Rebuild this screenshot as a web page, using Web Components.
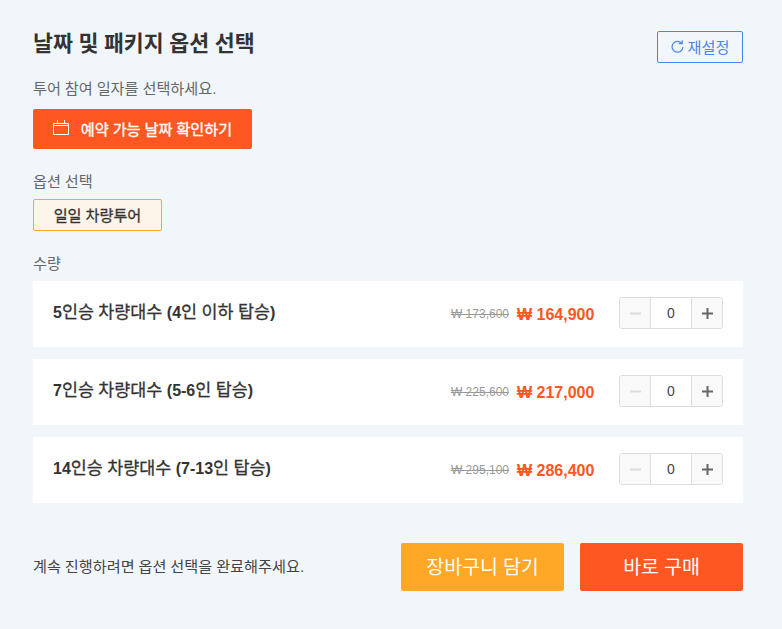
<!DOCTYPE html>
<html lang="ko">
<head>
<meta charset="utf-8">
<title>옵션 선택</title>
<style>
  html, body { margin: 0; background: #f1f6fb; }
  body { font-family: "Liberation Sans", "Noto Sans CJK KR", sans-serif; color: #222; }
</style>
</head>
<body>
<option-panel>
  <span slot="title">날짜 및 패키지 옵션 선택</span>
  <qty-row name="5인승 차량대수 (4인 이하 탑승)" was="173,600" now="164,900"></qty-row>
  <qty-row name="7인승 차량대수 (5-6인 탑승)" was="225,600" now="217,000"></qty-row>
  <qty-row name="14인승 차량대수 (7-13인 탑승)" was="295,100" now="286,400"></qty-row>
</option-panel>

<script>
class QtyStepper extends HTMLElement {
  constructor() {
    super();
    this.attachShadow({ mode: "open" });
    this.shadowRoot.innerHTML = `
    <style>
      :host { display: flex; width: 104px; height: 32px; box-sizing: border-box; border: 1px solid #ddd; border-radius: 3px; overflow: hidden; }
      .btn { display: grid; place-items: center; width: 30px; background: #f9f9f9; }
      .val { width: 42px; box-sizing: border-box; background: #fff; border-left: 1px solid #ddd; border-right: 1px solid #ddd; display: grid; place-items: center; font-size: 14px; color: #444; }
      svg { display: block; }
    </style>
    <div class="btn"><svg width="11" height="11" viewBox="0 0 11 11"><path d="M0 5.5h11" stroke="#ddd" stroke-width="2"/></svg></div>
    <div class="val">0</div>
    <div class="btn"><svg width="11" height="11" viewBox="0 0 11 11"><path d="M0 5.5h11M5.5 0v11" stroke="#666" stroke-width="2"/></svg></div>`;
  }
}
customElements.define("qty-stepper", QtyStepper);

class QtyRow extends HTMLElement {
  constructor() {
    super();
    this.attachShadow({ mode: "open" });
  }
  connectedCallback() {
    // hangul runs get their own size and weight, digits stay bold
    const name = this.getAttribute("name").replace(/[가-힣]+/g, m => `<span class="ko">${m}</span>`);
    this.shadowRoot.innerHTML = `
    <style>
      :host { display: flex; align-items: center; height: 66px; box-sizing: border-box; padding: 0 20px 2px; background: #fff; }
      .name { flex: 1; font-size: 16px; line-height: 20px; font-weight: 700; color: #333; }
      .ko { font-size: 17.4px; line-height: 1; font-weight: 400; -webkit-text-stroke: .3px #333; }
      .was { font-size: 12px; color: #999; text-decoration: line-through; margin: 2px 8px 0 0; }
      .now { font-size: 16px; font-weight: 700; color: #ff5722; margin: 4px 24px 0 0; width: 78px; white-space: nowrap; }
    </style>
    <div class="name">${name}</div>
    <div class="was">₩ ${this.getAttribute("was")}</div>
    <div class="now">₩ ${this.getAttribute("now")}</div>
    <qty-stepper></qty-stepper>`;
  }
}
customElements.define("qty-row", QtyRow);

class OptionPanel extends HTMLElement {
  constructor() {
    super();
    this.attachShadow({ mode: "open" });
    this.shadowRoot.innerHTML = `
    <style>
      :host { display: block; width: 782px; height: 629px; box-sizing: border-box; padding: 31px 39px 0 33px; }
      .head { display: flex; justify-content: space-between; align-items: flex-start; height: 32px; }
      h2 { margin: 2px 0 0; font-size: 21.7px; font-weight: 700; line-height: 22px; color: #333; word-spacing: -.5px; }
      .reset { display: flex; align-items: center; justify-content: center; gap: 4px; width: 86px; height: 32px; box-sizing: border-box; padding-bottom: 2px; border: 1px solid #4a86e8; border-radius: 2px; color: #4a86e8; font-size: 15.2px; }
      .label { font-size: 15.2px; line-height: 20px; color: #666; word-spacing: -.35px; }
      .date-label { margin-top: 16px; }
      .date { display: flex; align-items: center; justify-content: center; gap: 12px; width: 219px; height: 40px; box-sizing: border-box; padding-bottom: 3px; margin-top: 10px; border-radius: 2px; background: #ff5722; color: #fff; font-size: 15.2px; -webkit-text-stroke: .35px #fff; word-spacing: -.35px; }
      .opt-label { margin-top: 23px; }
      .opt { display: grid; place-items: center; width: 129px; height: 32px; box-sizing: border-box; padding-bottom: 3px; margin-top: 7px; border: 1px solid #ffa726; border-radius: 2px; background: #fdf4ea; font-size: 15.2px; -webkit-text-stroke: .3px #333; color: #333; word-spacing: -.35px; }
      .qty-label { margin-top: 23px; }
      .rows { display: grid; gap: 12px; margin-top: 7px; }
      .foot { display: flex; align-items: center; margin-top: 40px; }
      .msg { flex: 1; margin-bottom: 4px; font-size: 15.2px; color: #444; word-spacing: -.35px; }
      .cta { display: grid; place-items: center; width: 163px; height: 48px; box-sizing: border-box; padding-bottom: 3px; border-radius: 2px; color: #fff; font-size: 19.5px; word-spacing: -.45px; }
      .cart { background: #ffa726; margin-right: 16px; }
      .buy { background: #ff5722; }
      svg { display: block; }
    </style>
    <div class="head">
      <h2><slot name="title"></slot></h2>
      <div class="reset">
        <svg width="13" height="14" viewBox="0 0 13 14" fill="none" stroke="#4a86e8" stroke-width="1.2"><path d="M10.6 4.2A5.4 5.4 0 1 0 11.9 8"/><path d="M11.2 1.2v3.4H7.8"/></svg>
        재설정
      </div>
    </div>
    <div class="label date-label">투어 참여 일자를 선택하세요.</div>
    <div class="date">
      <svg width="16" height="15" viewBox="0 0 16 15" fill="none" stroke="#fff" stroke-width="1"><path d="M.5 3.5h15v11H.5zM.5 5.5h15M4.5 0v4M11.5 0v4"/></svg>
      예약 가능 날짜 확인하기
    </div>
    <div class="label opt-label">옵션 선택</div>
    <div class="opt">일일 차량투어</div>
    <div class="label qty-label">수량</div>
    <div class="rows"><slot></slot></div>
    <div class="foot">
      <div class="msg">계속 진행하려면 옵션 선택을 완료해주세요.</div>
      <div class="cta cart">장바구니 담기</div>
      <div class="cta buy">바로 구매</div>
    </div>`;
  }
}
customElements.define("option-panel", OptionPanel);
</script>
</body>
</html>
